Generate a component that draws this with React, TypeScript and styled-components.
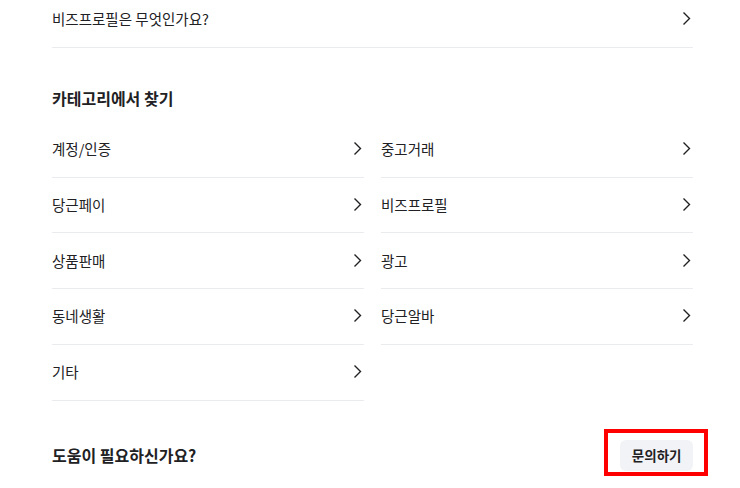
import styled, { createGlobalStyle } from "styled-components";

const GlobalStyle = createGlobalStyle`
  body {
    margin: 0;
    background: #ffffff;
    font-family: "Noto Sans CJK KR", "Noto Sans", sans-serif;
    color: #212124;
  }
`;

const Page = styled.div`
  width: 641px;
  padding: 0 47px 0 52px;
  overflow: hidden;
  height: 488px;
`;

const TopList = styled.ul`
  list-style: none;
  margin: -8px 0 0;
  padding: 0;
`;

const Row = styled.li`
  box-sizing: border-box;
  height: 55.75px;
  display: flex;
  align-items: center;
  justify-content: space-between;
  border-bottom: 1px solid #eaebee;
  font-size: 14.5px;
  color: #212124;
  padding-right: 2px;
  padding-bottom: 1px;
`;

const SectionTitle = styled.h2`
  margin: 38px 0 12px;
  font-size: 16px;
  line-height: 24px;
  font-weight: 700;
`;

const Grid = styled.ul`
  list-style: none;
  margin: 0;
  padding: 0;
  display: grid;
  grid-template-columns: 1fr 1fr;
  column-gap: 17px;
`;

const Footer = styled.div`
  margin-top: 39px;
  display: flex;
  align-items: center;
  justify-content: space-between;
`;

const FooterTitle = styled.h3`
  margin: 0;
  font-size: 16px;
  font-weight: 700;
`;

const ButtonWrap = styled.div`
  position: relative;
`;

const AskButton = styled.button`
  height: 31px;
  padding: 0 11.5px;
  border: none;
  border-radius: 6px;
  background: #f2f3f6;
  font-family: inherit;
  font-size: 13.5px;
  font-weight: 700;
  color: #212124;
  display: block;
`;

const Highlight = styled.span`
  position: absolute;
  left: -16px;
  right: -15px;
  top: -11px;
  bottom: -5px;
  border: 4px solid #ff0000;
  pointer-events: none;
`;

const Chevron = () => (
  <svg width="9" height="15" viewBox="0 0 9 15" fill="none">
    <path d="M1.5 1.5 L7.5 7.5 L1.5 13.5" stroke="#212124" strokeWidth="1.4" />
  </svg>
);

const categories = [
  ["계정/인증", "중고거래"],
  ["당근페이", "비즈프로필"],
  ["상품판매", "광고"],
  ["동네생활", "당근알바"],
  ["기타", null],
];

export default function App() {
  return (
    <>
      <GlobalStyle />
      <Page>
        <TopList>
          <Row>
            비즈프로필은 무엇인가요?
            <Chevron />
          </Row>
        </TopList>

        <SectionTitle>카테고리에서 찾기</SectionTitle>
        <Grid>
          {categories.flat().map((name, i) =>
            name ? (
              <Row key={i}>
                {name}
                <Chevron />
              </Row>
            ) : (
              <li key={i} />
            )
          )}
        </Grid>

        <Footer>
          <FooterTitle>도움이 필요하신가요?</FooterTitle>
          <ButtonWrap>
            <AskButton>문의하기</AskButton>
            <Highlight />
          </ButtonWrap>
        </Footer>
      </Page>
    </>
  );
}
